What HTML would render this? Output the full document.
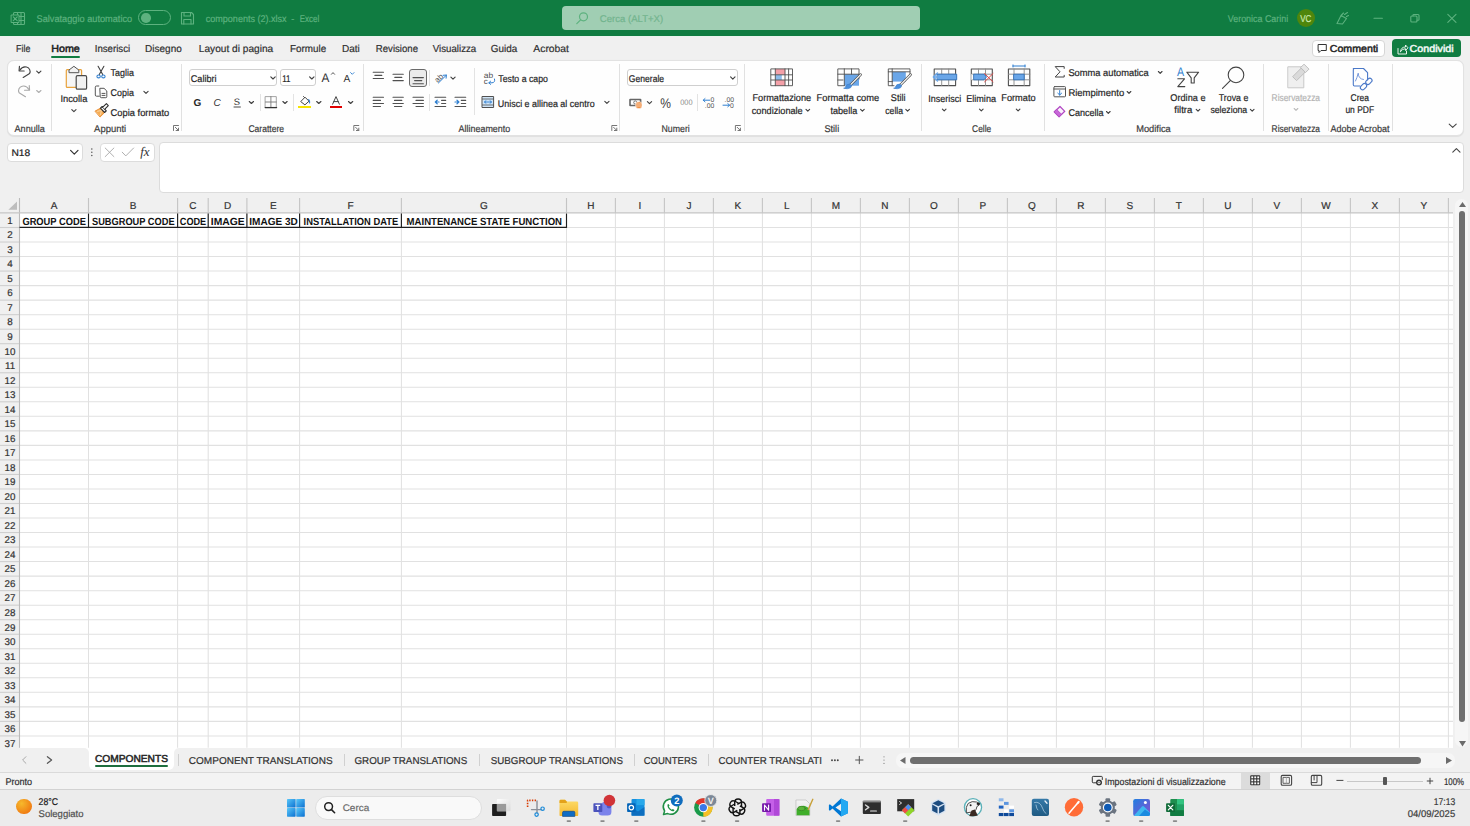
<!DOCTYPE html>
<html><head><meta charset="utf-8"><style>
html,body{text-rendering:geometricPrecision;margin:0;padding:0;width:1470px;height:826px;overflow:hidden;background:#f0f0f0;font-family:"Liberation Sans",sans-serif;}
#root{position:relative;width:1470px;height:826px;overflow:hidden;}
svg{position:absolute;left:0;top:0;}
</style></head><body><div id="root">
<div style="position:absolute;left:0px;top:0px;width:1470px;height:36px;background:#107c41"></div>
<div style="position:absolute;left:0px;top:36.2px;width:1470px;height:1.1999999999999957px;background:#eaf4ee"></div>
<div style="position:absolute;left:138px;top:10px;width:33.400000000000006px;height:15.2px;border:1.5px solid #5db27f;border-radius:8px;box-sizing:border-box"></div>
<div style="position:absolute;left:141px;top:13px;width:9.5px;height:9.5px;background:#5db27f;border-radius:50%"></div>
<div style="position:absolute;left:562px;top:6px;width:358px;height:24px;background:#a0ceb3;border-radius:4px"></div>
<div style="position:absolute;left:1297.1px;top:9px;width:18.40000000000009px;height:18.4px;background:#4f860c;border-radius:50%"></div>
<div style="position:absolute;left:51px;top:55.5px;width:29px;height:2.0px;background:#107c41;border-radius:1px"></div>
<div style="position:absolute;left:1312px;top:39.8px;width:73.29999999999995px;height:17.200000000000003px;background:#fff;border:1px solid #d6d6d6;border-radius:4px;box-sizing:border-box"></div>
<div style="position:absolute;left:1392px;top:39.2px;width:68.70000000000005px;height:17.9px;background:#107c41;border-radius:4px"></div>
<div style="position:absolute;left:6.5px;top:60.2px;width:1457.5px;height:75.39999999999999px;background:#fefefe;border:1px solid #e2e2e2;border-radius:7px;box-sizing:border-box;box-shadow:0 0.6px 1px rgba(0,0,0,0.07)"></div>
<div style="position:absolute;left:51.4px;top:64px;width:1.0px;height:67px;background:#e1e1e1"></div>
<div style="position:absolute;left:181.4px;top:64px;width:1.0px;height:67px;background:#e1e1e1"></div>
<div style="position:absolute;left:362.7px;top:64px;width:1.0px;height:67px;background:#e1e1e1"></div>
<div style="position:absolute;left:619.2px;top:64px;width:1.0px;height:67px;background:#e1e1e1"></div>
<div style="position:absolute;left:743.6px;top:64px;width:1.0px;height:67px;background:#e1e1e1"></div>
<div style="position:absolute;left:920.5px;top:64px;width:1.0px;height:67px;background:#e1e1e1"></div>
<div style="position:absolute;left:1043.9px;top:64px;width:1.0px;height:67px;background:#e1e1e1"></div>
<div style="position:absolute;left:1263.3px;top:64px;width:1.0px;height:67px;background:#e1e1e1"></div>
<div style="position:absolute;left:1327.6px;top:64px;width:1.0px;height:67px;background:#e1e1e1"></div>
<div style="position:absolute;left:1392px;top:64px;width:1px;height:67px;background:#e1e1e1"></div>
<div style="position:absolute;left:188.9px;top:69.3px;width:88.49999999999997px;height:17.200000000000003px;background:#fff;border:1px solid #cfcfcf;border-radius:3px;box-sizing:border-box"></div>
<div style="position:absolute;left:279.8px;top:69.3px;width:36.39999999999998px;height:17.200000000000003px;background:#fff;border:1px solid #cfcfcf;border-radius:3px;box-sizing:border-box"></div>
<div style="position:absolute;left:626.8px;top:69.3px;width:110.80000000000007px;height:17.10000000000001px;background:#fff;border:1px solid #cfcfcf;border-radius:3px;box-sizing:border-box"></div>
<div style="position:absolute;left:6.5px;top:142.5px;width:76.8px;height:19.099999999999994px;background:#fff;border:1px solid #dcdcdc;border-radius:4px;box-sizing:border-box"></div>
<div style="position:absolute;left:99.6px;top:142.5px;width:55.80000000000001px;height:19.099999999999994px;background:#fff;border:1px solid #dcdcdc;border-radius:4px;box-sizing:border-box"></div>
<div style="position:absolute;left:159.3px;top:142px;width:1304.7px;height:50.599999999999994px;background:#fff;border:1px solid #dcdcdc;border-radius:4px;box-sizing:border-box"></div>
<div style="position:absolute;left:0px;top:198px;width:1453.2px;height:15px;background:#f0f0f0"></div>
<div style="position:absolute;left:0px;top:213px;width:19.5px;height:534.8px;background:#f0f0f0"></div>
<div style="position:absolute;left:19.5px;top:213px;width:1433.7px;height:534.8px;background:#ffffff"></div>
<svg width="1470" height="826" style="position:absolute;left:0;top:0" fill="none"><path d="M88.5,213 V747.8" stroke="#e1e1e1" stroke-width="1.05"/><path d="M88.5,198 V213" stroke="#c4c4c4" stroke-width="1.1"/><path d="M177.6,213 V747.8" stroke="#e1e1e1" stroke-width="1.05"/><path d="M177.6,198 V213" stroke="#c4c4c4" stroke-width="1.1"/><path d="M208.2,213 V747.8" stroke="#e1e1e1" stroke-width="1.05"/><path d="M208.2,198 V213" stroke="#c4c4c4" stroke-width="1.1"/><path d="M246.9,213 V747.8" stroke="#e1e1e1" stroke-width="1.05"/><path d="M246.9,198 V213" stroke="#c4c4c4" stroke-width="1.1"/><path d="M299.6,213 V747.8" stroke="#e1e1e1" stroke-width="1.05"/><path d="M299.6,198 V213" stroke="#c4c4c4" stroke-width="1.1"/><path d="M401.4,213 V747.8" stroke="#e1e1e1" stroke-width="1.05"/><path d="M401.4,198 V213" stroke="#c4c4c4" stroke-width="1.1"/><path d="M566.5,213 V747.8" stroke="#e1e1e1" stroke-width="1.05"/><path d="M566.5,198 V213" stroke="#c4c4c4" stroke-width="1.1"/><path d="M615.4,213 V747.8" stroke="#e1e1e1" stroke-width="1.05"/><path d="M615.4,198 V213" stroke="#c4c4c4" stroke-width="1.1"/><path d="M664.4,213 V747.8" stroke="#e1e1e1" stroke-width="1.05"/><path d="M664.4,198 V213" stroke="#c4c4c4" stroke-width="1.1"/><path d="M713.4,213 V747.8" stroke="#e1e1e1" stroke-width="1.05"/><path d="M713.4,198 V213" stroke="#c4c4c4" stroke-width="1.1"/><path d="M762.4,213 V747.8" stroke="#e1e1e1" stroke-width="1.05"/><path d="M762.4,198 V213" stroke="#c4c4c4" stroke-width="1.1"/><path d="M811.4,213 V747.8" stroke="#e1e1e1" stroke-width="1.05"/><path d="M811.4,198 V213" stroke="#c4c4c4" stroke-width="1.1"/><path d="M860.4,213 V747.8" stroke="#e1e1e1" stroke-width="1.05"/><path d="M860.4,198 V213" stroke="#c4c4c4" stroke-width="1.1"/><path d="M909.4,213 V747.8" stroke="#e1e1e1" stroke-width="1.05"/><path d="M909.4,198 V213" stroke="#c4c4c4" stroke-width="1.1"/><path d="M958.4,213 V747.8" stroke="#e1e1e1" stroke-width="1.05"/><path d="M958.4,198 V213" stroke="#c4c4c4" stroke-width="1.1"/><path d="M1007.4,213 V747.8" stroke="#e1e1e1" stroke-width="1.05"/><path d="M1007.4,198 V213" stroke="#c4c4c4" stroke-width="1.1"/><path d="M1056.4,213 V747.8" stroke="#e1e1e1" stroke-width="1.05"/><path d="M1056.4,198 V213" stroke="#c4c4c4" stroke-width="1.1"/><path d="M1105.4,213 V747.8" stroke="#e1e1e1" stroke-width="1.05"/><path d="M1105.4,198 V213" stroke="#c4c4c4" stroke-width="1.1"/><path d="M1154.4,213 V747.8" stroke="#e1e1e1" stroke-width="1.05"/><path d="M1154.4,198 V213" stroke="#c4c4c4" stroke-width="1.1"/><path d="M1203.4,213 V747.8" stroke="#e1e1e1" stroke-width="1.05"/><path d="M1203.4,198 V213" stroke="#c4c4c4" stroke-width="1.1"/><path d="M1252.4,213 V747.8" stroke="#e1e1e1" stroke-width="1.05"/><path d="M1252.4,198 V213" stroke="#c4c4c4" stroke-width="1.1"/><path d="M1301.4,213 V747.8" stroke="#e1e1e1" stroke-width="1.05"/><path d="M1301.4,198 V213" stroke="#c4c4c4" stroke-width="1.1"/><path d="M1350.4,213 V747.8" stroke="#e1e1e1" stroke-width="1.05"/><path d="M1350.4,198 V213" stroke="#c4c4c4" stroke-width="1.1"/><path d="M1399.4,213 V747.8" stroke="#e1e1e1" stroke-width="1.05"/><path d="M1399.4,198 V213" stroke="#c4c4c4" stroke-width="1.1"/><path d="M1448.4,213 V747.8" stroke="#e1e1e1" stroke-width="1.05"/><path d="M1448.4,198 V213" stroke="#c4c4c4" stroke-width="1.1"/><path d="M19.5,227.5 H1453.2" stroke="#e1e1e1" stroke-width="1.05"/><path d="M0,227.5 H19.5" stroke="#cfcfcf" stroke-width="1.1"/><path d="M19.5,242.026 H1453.2" stroke="#e1e1e1" stroke-width="1.05"/><path d="M0,242.026 H19.5" stroke="#cfcfcf" stroke-width="1.1"/><path d="M19.5,256.552 H1453.2" stroke="#e1e1e1" stroke-width="1.05"/><path d="M0,256.552 H19.5" stroke="#cfcfcf" stroke-width="1.1"/><path d="M19.5,271.078 H1453.2" stroke="#e1e1e1" stroke-width="1.05"/><path d="M0,271.078 H19.5" stroke="#cfcfcf" stroke-width="1.1"/><path d="M19.5,285.604 H1453.2" stroke="#e1e1e1" stroke-width="1.05"/><path d="M0,285.604 H19.5" stroke="#cfcfcf" stroke-width="1.1"/><path d="M19.5,300.13 H1453.2" stroke="#e1e1e1" stroke-width="1.05"/><path d="M0,300.13 H19.5" stroke="#cfcfcf" stroke-width="1.1"/><path d="M19.5,314.656 H1453.2" stroke="#e1e1e1" stroke-width="1.05"/><path d="M0,314.656 H19.5" stroke="#cfcfcf" stroke-width="1.1"/><path d="M19.5,329.182 H1453.2" stroke="#e1e1e1" stroke-width="1.05"/><path d="M0,329.182 H19.5" stroke="#cfcfcf" stroke-width="1.1"/><path d="M19.5,343.70799999999997 H1453.2" stroke="#e1e1e1" stroke-width="1.05"/><path d="M0,343.70799999999997 H19.5" stroke="#cfcfcf" stroke-width="1.1"/><path d="M19.5,358.23400000000004 H1453.2" stroke="#e1e1e1" stroke-width="1.05"/><path d="M0,358.23400000000004 H19.5" stroke="#cfcfcf" stroke-width="1.1"/><path d="M19.5,372.76 H1453.2" stroke="#e1e1e1" stroke-width="1.05"/><path d="M0,372.76 H19.5" stroke="#cfcfcf" stroke-width="1.1"/><path d="M19.5,387.286 H1453.2" stroke="#e1e1e1" stroke-width="1.05"/><path d="M0,387.286 H19.5" stroke="#cfcfcf" stroke-width="1.1"/><path d="M19.5,401.812 H1453.2" stroke="#e1e1e1" stroke-width="1.05"/><path d="M0,401.812 H19.5" stroke="#cfcfcf" stroke-width="1.1"/><path d="M19.5,416.33799999999997 H1453.2" stroke="#e1e1e1" stroke-width="1.05"/><path d="M0,416.33799999999997 H19.5" stroke="#cfcfcf" stroke-width="1.1"/><path d="M19.5,430.86400000000003 H1453.2" stroke="#e1e1e1" stroke-width="1.05"/><path d="M0,430.86400000000003 H19.5" stroke="#cfcfcf" stroke-width="1.1"/><path d="M19.5,445.39 H1453.2" stroke="#e1e1e1" stroke-width="1.05"/><path d="M0,445.39 H19.5" stroke="#cfcfcf" stroke-width="1.1"/><path d="M19.5,459.916 H1453.2" stroke="#e1e1e1" stroke-width="1.05"/><path d="M0,459.916 H19.5" stroke="#cfcfcf" stroke-width="1.1"/><path d="M19.5,474.442 H1453.2" stroke="#e1e1e1" stroke-width="1.05"/><path d="M0,474.442 H19.5" stroke="#cfcfcf" stroke-width="1.1"/><path d="M19.5,488.968 H1453.2" stroke="#e1e1e1" stroke-width="1.05"/><path d="M0,488.968 H19.5" stroke="#cfcfcf" stroke-width="1.1"/><path d="M19.5,503.49399999999997 H1453.2" stroke="#e1e1e1" stroke-width="1.05"/><path d="M0,503.49399999999997 H19.5" stroke="#cfcfcf" stroke-width="1.1"/><path d="M19.5,518.02 H1453.2" stroke="#e1e1e1" stroke-width="1.05"/><path d="M0,518.02 H19.5" stroke="#cfcfcf" stroke-width="1.1"/><path d="M19.5,532.546 H1453.2" stroke="#e1e1e1" stroke-width="1.05"/><path d="M0,532.546 H19.5" stroke="#cfcfcf" stroke-width="1.1"/><path d="M19.5,547.072 H1453.2" stroke="#e1e1e1" stroke-width="1.05"/><path d="M0,547.072 H19.5" stroke="#cfcfcf" stroke-width="1.1"/><path d="M19.5,561.598 H1453.2" stroke="#e1e1e1" stroke-width="1.05"/><path d="M0,561.598 H19.5" stroke="#cfcfcf" stroke-width="1.1"/><path d="M19.5,576.124 H1453.2" stroke="#e1e1e1" stroke-width="1.05"/><path d="M0,576.124 H19.5" stroke="#cfcfcf" stroke-width="1.1"/><path d="M19.5,590.65 H1453.2" stroke="#e1e1e1" stroke-width="1.05"/><path d="M0,590.65 H19.5" stroke="#cfcfcf" stroke-width="1.1"/><path d="M19.5,605.1759999999999 H1453.2" stroke="#e1e1e1" stroke-width="1.05"/><path d="M0,605.1759999999999 H19.5" stroke="#cfcfcf" stroke-width="1.1"/><path d="M19.5,619.702 H1453.2" stroke="#e1e1e1" stroke-width="1.05"/><path d="M0,619.702 H19.5" stroke="#cfcfcf" stroke-width="1.1"/><path d="M19.5,634.2280000000001 H1453.2" stroke="#e1e1e1" stroke-width="1.05"/><path d="M0,634.2280000000001 H19.5" stroke="#cfcfcf" stroke-width="1.1"/><path d="M19.5,648.754 H1453.2" stroke="#e1e1e1" stroke-width="1.05"/><path d="M0,648.754 H19.5" stroke="#cfcfcf" stroke-width="1.1"/><path d="M19.5,663.28 H1453.2" stroke="#e1e1e1" stroke-width="1.05"/><path d="M0,663.28 H19.5" stroke="#cfcfcf" stroke-width="1.1"/><path d="M19.5,677.806 H1453.2" stroke="#e1e1e1" stroke-width="1.05"/><path d="M0,677.806 H19.5" stroke="#cfcfcf" stroke-width="1.1"/><path d="M19.5,692.332 H1453.2" stroke="#e1e1e1" stroke-width="1.05"/><path d="M0,692.332 H19.5" stroke="#cfcfcf" stroke-width="1.1"/><path d="M19.5,706.858 H1453.2" stroke="#e1e1e1" stroke-width="1.05"/><path d="M0,706.858 H19.5" stroke="#cfcfcf" stroke-width="1.1"/><path d="M19.5,721.384 H1453.2" stroke="#e1e1e1" stroke-width="1.05"/><path d="M0,721.384 H19.5" stroke="#cfcfcf" stroke-width="1.1"/><path d="M19.5,735.91 H1453.2" stroke="#e1e1e1" stroke-width="1.05"/><path d="M0,735.91 H19.5" stroke="#cfcfcf" stroke-width="1.1"/><path d="M19.5,198 V747.8" stroke="#bababa" stroke-width="1.1"/><path d="M0,212.9 H1453.2" stroke="#c6c6c6" stroke-width="1.4"/><polygon points="17,201.4 17,209.8 8.4,209.8" fill="#bdbdbd"/><path d="M19.5,227.4 H566.5" stroke="#1e1e1e" stroke-width="1.15"/><path d="M88.5,213.6 V227.9" stroke="#1e1e1e" stroke-width="1.15"/><path d="M177.6,213.6 V227.9" stroke="#1e1e1e" stroke-width="1.15"/><path d="M208.2,213.6 V227.9" stroke="#1e1e1e" stroke-width="1.15"/><path d="M246.9,213.6 V227.9" stroke="#1e1e1e" stroke-width="1.15"/><path d="M299.6,213.6 V227.9" stroke="#1e1e1e" stroke-width="1.15"/><path d="M401.4,213.6 V227.9" stroke="#1e1e1e" stroke-width="1.15"/><path d="M566.5,213.6 V227.9" stroke="#1e1e1e" stroke-width="1.15"/></svg>
<div style="position:absolute;left:1453.2px;top:198px;width:16.799999999999955px;height:550px;background:#f0f0f0"></div>
<div style="position:absolute;left:1455px;top:199px;width:13.400000000000091px;height:548px;background:#f6f6f6;border-radius:7px"></div>
<svg style="position:absolute;left:1458.5px;top:202px;" width="7" height="5" viewBox="0 0 7 5"><polygon points="3.5,0 7,5 0,5" fill="#6b6b6b"/></svg>
<div style="position:absolute;left:1458.7px;top:211px;width:6.5px;height:511px;background:#6e6e6e;border-radius:4px"></div>
<svg style="position:absolute;left:1458.5px;top:741px;" width="7" height="5.5" viewBox="0 0 7 5.5"><polygon points="0,0 7,0 3.5,5.5" fill="#6b6b6b"/></svg>
<div style="position:absolute;left:0px;top:748px;width:1470px;height:24px;background:#f0f0f0"></div>
<div style="position:absolute;left:80px;top:747.5px;width:104px;height:6.5px;background:#fff"></div>
<div style="position:absolute;left:0px;top:747.8px;width:88.6px;height:24.200000000000045px;background:#f0f0f0;border-top-right-radius:5px"></div>
<div style="position:absolute;left:174.3px;top:747.8px;width:1278.9px;height:24.200000000000045px;background:#f0f0f0;border-top-left-radius:5px"></div>
<div style="position:absolute;left:88.6px;top:748px;width:85.70000000000002px;height:22.200000000000045px;background:#e6e6e6;border-radius:0 0 5.5px 5.5px"></div>
<div style="position:absolute;left:88.6px;top:747px;width:85.70000000000002px;height:22.600000000000023px;background:#fff;border-radius:0 0 5px 5px"></div>
<div style="position:absolute;left:95px;top:765.4px;width:73px;height:1.7000000000000455px;background:#1d6e3e;border-radius:1px"></div>
<div style="position:absolute;left:178px;top:754px;width:1px;height:12px;background:#d0d0d0"></div>
<div style="position:absolute;left:343.7px;top:754px;width:1.0px;height:12px;background:#d0d0d0"></div>
<div style="position:absolute;left:478.8px;top:754px;width:1.0px;height:12px;background:#d0d0d0"></div>
<div style="position:absolute;left:634.4px;top:754px;width:1.0px;height:12px;background:#d0d0d0"></div>
<div style="position:absolute;left:707.6px;top:754px;width:1.0px;height:12px;background:#d0d0d0"></div>
<div style="position:absolute;left:896px;top:753px;width:559px;height:15px;background:#f6f6f6;border-radius:7px"></div>
<svg style="position:absolute;left:900.4px;top:756.8px;" width="5.5" height="7" viewBox="0 0 5.5 7"><polygon points="5.5,0 5.5,7 0,3.5" fill="#6b6b6b"/></svg>
<div style="position:absolute;left:910px;top:757.1px;width:511px;height:6.699999999999932px;background:#6e6e6e;border-radius:4px"></div>
<svg style="position:absolute;left:1446px;top:757.1px;" width="6" height="7" viewBox="0 0 6 7"><polygon points="0,0 6,3.5 0,7" fill="#6b6b6b"/></svg>
<div style="position:absolute;left:0px;top:772px;width:1470px;height:17px;background:#f3f3f3;border-top:1px solid #dadada;box-sizing:border-box"></div>
<div style="position:absolute;left:1240.6px;top:773px;width:29.90000000000009px;height:16px;background:#dcdcdc"></div>
<div style="position:absolute;left:1346.6px;top:781px;width:76.40000000000009px;height:1px;background:#c8c8c8"></div>
<div style="position:absolute;left:1383.3px;top:777.2px;width:3.900000000000091px;height:7.7999999999999545px;background:#555;border-radius:1px"></div>
<div style="position:absolute;left:0px;top:789px;width:1470px;height:37px;background:#ececec;border-top:1px solid #d2d2d2;box-sizing:border-box"></div>
<div style="position:absolute;left:16px;top:799px;width:15.5px;height:15.399999999999977px;background:radial-gradient(circle at 35% 30%,#f6b92c,#f07b12 75%);border-radius:50%"></div>
<div style="position:absolute;left:315.3px;top:795.6px;width:166.89999999999998px;height:24.0px;background:#f9f9f9;border:1px solid #dedede;border-radius:12px;box-sizing:border-box"></div>
<div style="position:absolute;left:259.7px;top:93.8px;width:1.0px;height:17.200000000000003px;background:#e3e3e3"></div>
<div style="position:absolute;left:293.4px;top:93.8px;width:1.0px;height:17.200000000000003px;background:#e3e3e3"></div>
<div style="position:absolute;left:298.3px;top:105.8px;width:12.599999999999966px;height:2.700000000000003px;background:#f7e500"></div>
<div style="position:absolute;left:330.1px;top:105.8px;width:11.899999999999977px;height:2.700000000000003px;background:#e00000"></div>
<div style="position:absolute;left:409.2px;top:69.1px;width:17.600000000000023px;height:17.60000000000001px;background:#ebebeb;border:1.3px solid #6a6a6a;border-radius:3px;box-sizing:border-box"></div>
<div style="position:absolute;left:429.2px;top:69.5px;width:1.0px;height:16.5px;background:#e3e3e3"></div>
<div style="position:absolute;left:429.2px;top:93.8px;width:1.0px;height:17.60000000000001px;background:#e3e3e3"></div>
<div style="position:absolute;left:474.2px;top:68.3px;width:1.0px;height:46.3px;background:#e3e3e3"></div>
<div style="position:absolute;left:697.2px;top:93.5px;width:1.0px;height:17.5px;background:#e3e3e3"></div>
<svg width="1470" height="826" viewBox="0 0 1470 826" fill="none" stroke-linecap="round" stroke-linejoin="round"><g stroke="#5db27f" stroke-width="1.1"><rect x="13.5" y="12.5" width="11" height="12" rx="1"/><path d="M17.5,12.5 V24.5 M17.5,16.5 H24.5 M17.5,20.5 H24.5 M21,12.5 V24.5"/></g>
<rect x="11.5" y="15" width="7.5" height="7.5" fill="#107c41" stroke="#5db27f" stroke-width="1"/><path d="M13.3,16.8 L17.2,20.7 M17.2,16.8 L13.3,20.7" stroke="#5db27f" stroke-width="1.1"/>
<g stroke="#5db27f" stroke-width="1.1"><path d="M181.5,12.5 H191.5 L193.5,14.5 V24 H181.5 Z"/><path d="M184,12.5 V16 H190.5 V12.5 M183.8,24 V19.5 H191 V24"/></g>
<g stroke="#5db27f" stroke-width="1.2"><circle cx="583.5" cy="16.8" r="4"/><path d="M580.6,19.8 L576.8,23.6"/></g>
<g stroke="#5db27f" stroke-width="1.1"><path d="M1337,23.5 L1341,15.5 L1346.5,18.5 L1342.5,24 Z M1341,15.5 L1343.5,13 M1344.5,14.5 L1347.5,12.5 M1346.5,16.5 L1348.5,15.5"/></g>
<path d="M1374,18.2 H1382.4" stroke="#5db27f" stroke-width="1.1"/>
<g stroke="#5db27f" stroke-width="1.1"><rect x="1410.8" y="16" width="6.2" height="6" rx="1"/><path d="M1413,16 V15 Q1413,14.5 1414,14.5 H1418 Q1419,14.5 1419,15.5 V19.5 Q1419,20.3 1418,20.3 H1417"/></g>
<path d="M1447.8,14.3 L1456,22.3 M1456,14.3 L1447.8,22.3" stroke="#5db27f" stroke-width="1.1"/>
<path d="M1318.5,44.5 H1326.3 V50.5 H1321 L1319,52.5 V50.5 H1318.5 Z" stroke="#333" stroke-width="1"/>
<g stroke="#e8f3ec" stroke-width="1"><path d="M1398,48.5 V54 H1406.5 V51"/><path d="M1400.5,51.5 Q1401,47 1405.5,47 V45 L1408,47.8 L1405.5,50.5 V48.7 Q1402.5,48.7 1400.5,51.5 Z"/></g>
<g stroke="#424242" stroke-width="1.15"><path d="M19.44,66.4 L19.08,70.9 L24.16,71.04"/><path d="M19.8,70.2 C21.5,67.5 24,66.4 26.5,67 C29.5,67.8 31,71 29.6,73.6 L23.2,77.5"/></g>
<path d="M36.699999999999996,71.2 L38.8,73.2 L40.9,71.2" stroke="#424242" stroke-width="1.15"/>
<g stroke="#a8a8a8" stroke-width="1.1"><path d="M29.24,85.6 L29.6,90.1 L24.52,90.24"/><path d="M28.88,89.4 C27.18,86.7 24.68,85.6 22.18,86.2 C19.18,87 17.68,90.2 19.08,92.8 L25.48,96.7"/></g>
<path d="M36.699999999999996,90.5 L38.8,92.5 L40.9,90.5" stroke="#b0b0b0" stroke-width="1.15"/>
<rect x="66.3" y="69.6" width="15.3" height="17.8" rx="1" fill="#f6f6f6" stroke="#e8a23c" stroke-width="1.2"/>
<path d="M69,72.3 V70 L73.9,66.3 L78.8,70 V72.3 Z" fill="#f2f2f2" stroke="#555" stroke-width="1"/>
<rect x="76.2" y="75.6" width="10.4" height="13.6" rx="1.3" fill="#f2f2f2" stroke="#4a4a4a" stroke-width="1.2"/>
<path d="M71.80000000000001,109.6 L73.9,111.6 L76.0,109.6" stroke="#424242" stroke-width="1.15"/>
<g stroke="#404040" stroke-width="1.1"><path d="M98.1,66.3 L102.7,74.6 M103.9,66.3 L99.3,74.6"/></g><g stroke="#2f7fd0" stroke-width="1.05"><ellipse cx="98.6" cy="76.4" rx="1.7" ry="1.45"/><ellipse cx="103.4" cy="76.4" rx="1.7" ry="1.45"/></g>
<path d="M98.8,86 H96.5 Q95.3,86 95.3,87.2 V95 Q95.3,96.2 96.5,96.2 H99.3" stroke="#555" stroke-width="1"/>
<path d="M100.2,88.3 H104 L106.8,91 V96.7 Q106.8,97.7 105.8,97.7 H101.2 Q100.2,97.7 100.2,96.7 Z M102,93.4 H105 M102,95.4 H105" stroke="#555" stroke-width="1"/>
<path d="M143.9,91.4 L146,93.4 L148.1,91.4" stroke="#424242" stroke-width="1.15"/>
<path d="M95.3,111 L100.4,108.2 L104.6,112.5 L100.3,116.8 Z" fill="#f5ad55" stroke="#e8892c" stroke-width="0.9"/>
<path d="M97.5,111.3 L101.5,110.4 L100.5,114.5" stroke="#fce0b8" stroke-width="0.8"/>
<path d="M100.4,108.2 L102.2,106.5 L106.3,110.8 L104.6,112.5 Z" fill="#fff" stroke="#2e2e2e" stroke-width="1.1"/>
<path d="M102.8,107.2 L106.4,103.7 L108.3,105.6 L104.8,109.2" fill="#fff" stroke="#2e2e2e" stroke-width="1.1"/>
<path d="M173.5,130.5 V125.5 H178.5 M175.3,127.3 L178.5,130.5 M178.5,128.1 V130.5 H176.1" stroke="#666" stroke-width="0.9"/>
<path d="M353.8,130.5 V125.5 H358.8 M355.6,127.3 L358.8,130.5 M358.8,128.1 V130.5 H356.40000000000003" stroke="#666" stroke-width="0.9"/>
<path d="M611.8,130.5 V125.5 H616.8 M613.5999999999999,127.3 L616.8,130.5 M616.8,128.1 V130.5 H614.4" stroke="#666" stroke-width="0.9"/>
<path d="M735.4,130.5 V125.5 H740.4 M737.1999999999999,127.3 L740.4,130.5 M740.4,128.1 V130.5 H738.0" stroke="#666" stroke-width="0.9"/>
<path d="M270.8,76.80000000000001 L273,79.0 L275.2,76.80000000000001" stroke="#424242" stroke-width="1.15"/>
<path d="M309.6,76.80000000000001 L311.8,79.0 L314.0,76.80000000000001" stroke="#424242" stroke-width="1.15"/>
<path d="M730.5999999999999,76.9 L732.8,79.1 L735.0,76.9" stroke="#424242" stroke-width="1.15"/>
<text x="321.6" y="81.7" font-family="Liberation Sans" font-size="12.4" fill="#333" stroke="none" transform="translate(321.6,0) scale(0.95,1) translate(-321.6,0)">A</text>
<path d="M331.4,74.3 L333,72.6 L334.6,74.3" stroke="#444" stroke-width="0.9"/>
<text x="343.4" y="81.7" font-family="Liberation Sans" font-size="10.2" fill="#333" stroke="none">A</text>
<path d="M350.6,72.6 L352.3,74.3 L354,72.6" stroke="#2f7fd0" stroke-width="0.9"/>
<text x="193.6" y="105.6" font-family="Liberation Sans" font-size="10" font-weight="700" fill="#262626" stroke="none">G</text>
<text x="213.4" y="105.6" font-family="Liberation Sans" font-size="10" font-style="italic" fill="#333" stroke="none">C</text>
<text x="233.8" y="105.3" font-family="Liberation Sans" font-size="9.4" fill="#333" stroke="none">S</text><path d="M234,107 H240.4" stroke="#333" stroke-width="0.9"/>
<path d="M249.3,101.5 L251.4,103.5 L253.5,101.5" stroke="#424242" stroke-width="1.15"/>
<g stroke="#555" stroke-width="0.9"><rect x="265.5" y="96.6" width="10.8" height="10.8" stroke-dasharray="none" stroke="#9a9a9a"/><path d="M270.9,96.6 V107.4 M265.5,102 H276.3" stroke="#777"/></g><path d="M265.2,107.6 H276.6" stroke="#333" stroke-width="1.3"/>
<path d="M282.9,101.5 L285,103.5 L287.1,101.5" stroke="#424242" stroke-width="1.15"/>
<path d="M301,101.3 L305,97.2 L309,101.2 L305.2,104.6 Z" stroke="#444" stroke-width="1"/><path d="M303.5,96.5 L304.6,97.6" stroke="#444" stroke-width="1"/><path d="M308.7,99.5 Q310,101 309.6,103" stroke="#2f7fd0" stroke-width="1.1"/>
<path d="M316.7,101.5 L318.8,103.5 L320.90000000000003,101.5" stroke="#424242" stroke-width="1.15"/>
<path d="M332.6,104.2 L336,96.6 L339.4,104.2 M333.8,101.6 H338.2" stroke="#444" stroke-width="1"/>
<path d="M348.5,101.5 L350.6,103.5 L352.70000000000005,101.5" stroke="#424242" stroke-width="1.15"/>
<path d="M373.2,72.3 H383.5 M374.9,75.4 H381.8 M373.2,78.5 H383.5 " stroke="#505050" stroke-width="1.1"/>
<path d="M393,74.3 H403.3 M394.8,77.4 H401.8 M393,80.6 H403.3 " stroke="#505050" stroke-width="1.1"/>
<path d="M413,77.6 H423.4 M414.6,80.6 H421.8 M413,83.7 H423.4 " stroke="#505050" stroke-width="1.1"/>
<text x="0" y="0" font-family="Liberation Sans" font-size="7.8" fill="#505050" stroke="none" transform="translate(437.6,83) rotate(-45)">ab</text>
<path d="M438.4,83 L446.3,75.2 M443.2,75.3 L446.4,75 L446.1,78.2" stroke="#2f7fd0" stroke-width="1"/>
<path d="M450.9,77.2 L453,79.2 L455.1,77.2" stroke="#424242" stroke-width="1.15"/>
<path d="M373.2,97.3 H383.5 M373.2,100.4 H380.5 M373.2,103.5 H383.5 M373.2,106.5 H380.5 " stroke="#505050" stroke-width="1.1"/>
<path d="M393,97.3 H403.3 M394.5,100.4 H401.8 M393,103.5 H403.3 M394.5,106.5 H401.8 " stroke="#505050" stroke-width="1.1"/>
<path d="M413,97.3 H423.4 M416,100.4 H423.4 M413,103.5 H423.4 M416,106.5 H423.4 " stroke="#505050" stroke-width="1.1"/>
<path d="M435,97.3 H445.7 M435,106.5 H445.7 " stroke="#505050" stroke-width="1.1"/>
<path d="M441.6,100.4 H445.7 M441.6,103.5 H445.7 " stroke="#505050" stroke-width="1.1"/>
<path d="M439,102 H435.5 M437.2,100.2 L435.3,102 L437.2,103.8" stroke="#2f7fd0" stroke-width="1.2"/>
<path d="M455,97.3 H465.7 M455,106.5 H465.7 " stroke="#505050" stroke-width="1.1"/>
<path d="M461.3,100.4 H465.7 M461.3,103.5 H465.7 " stroke="#505050" stroke-width="1.1"/>
<path d="M455,102 H458.7 M457,100.2 L458.9,102 L457,103.8" stroke="#2f7fd0" stroke-width="1.2"/>
<text x="483.8" y="78.4" font-family="Liberation Sans" font-size="8" fill="#505050" stroke="none" textLength="9.4" lengthAdjust="spacingAndGlyphs">ab</text><text x="483.8" y="83.6" font-family="Liberation Sans" font-size="8" fill="#505050" stroke="none">c</text>
<path d="M494.5,79 Q495.5,82.5 492,82.8 H489 M490.6,81.2 L488.8,82.8 L490.6,84.4" stroke="#2f7fd0" stroke-width="1"/>
<rect x="482.4" y="96.5" width="11.2" height="11" fill="#cfe4f7" stroke="#505050" stroke-width="1"/><path d="M482.4,99 H493.6 M482.4,105 H493.6" stroke="#505050" stroke-width="0.8"/><path d="M484.5,102 H491.5 M486,100.7 L484.5,102 L486,103.3 M490,100.7 L491.5,102 L490,103.3" stroke="#2f7fd0" stroke-width="0.9"/>
<path d="M604.8,101.4 L606.9,103.4 L609.0,101.4" stroke="#424242" stroke-width="1.15"/>
<rect x="629.2" y="98.8" width="12.2" height="7.4" rx="1" fill="#666" stroke="none"/><rect x="630.8" y="100.2" width="9" height="4.6" rx="0.5" fill="#fff" stroke="none"/><circle cx="635.3" cy="102.5" r="1.6" stroke="#666" stroke-width="0.9"/>
<rect x="635.6" y="101.8" width="6.4" height="6.6" rx="2.5" fill="#f08a3c" stroke="#fff" stroke-width="0.6"/><path d="M636.4,104 H641.2 M636.4,106 H641.2" stroke="#fff" stroke-width="0.6"/>
<path d="M647.4,101.7 L649.5,103.7 L651.6,101.7" stroke="#424242" stroke-width="1.15"/>
<text x="660.3" y="108.2" font-family="Liberation Sans" font-size="14" fill="#404040" stroke="none" transform="translate(660.3,0) scale(0.86,1) translate(-660.3,0)">%</text>
<text x="680.2" y="105.2" font-family="Liberation Sans" font-size="8" fill="#8a8a8a" stroke="none" transform="translate(680.2,0) scale(0.92,1) translate(-680.2,0)">000</text>
<text x="710.5" y="101.6" font-family="Liberation Sans" font-size="6.8" fill="#555" stroke="none">0</text><text x="704.8" y="108.2" font-family="Liberation Sans" font-size="6.8" fill="#555" stroke="none">.00</text>
<path d="M709.8,100.2 H703.3 M705,98.6 L703.2,100.2 L705,101.8" stroke="#2f7fd0" stroke-width="1"/>
<text x="724.6" y="101.6" font-family="Liberation Sans" font-size="6.8" fill="#555" stroke="none">.00</text><text x="730" y="108.2" font-family="Liberation Sans" font-size="6.8" fill="#555" stroke="none">0</text>
<path d="M723,105.2 H729.5 M727.8,103.6 L729.6,105.2 L727.8,106.8" stroke="#2f7fd0" stroke-width="1"/>
<rect x="775.3" y="68.9" width="9.8" height="5.9" fill="#f4a0a8" stroke="none"/><rect x="775.3" y="80" width="9.8" height="5.7" fill="#f4a0a8" stroke="none"/><rect x="775.3" y="74.8" width="6.5" height="5.2" fill="#8fbcea" stroke="none"/>
<g stroke="#505050" stroke-width="0.9"><rect x="771.2" y="68.9" width="21.3" height="16.8"/><path d="M775.3,68.9 V85.7 M785,68.9 V85.7 M788.6,68.9 V85.7 M771.2,74.8 H792.5 M771.2,80 H792.5"/></g>
<rect x="844.3" y="74.2" width="14.7" height="11.5" fill="#6aa6e8" stroke="none"/>
<g stroke="#505050" stroke-width="0.9"><path d="M859,79 V68.9 H837.8 V85.7 H844 M837.8,74.2 H859 M837.8,80 H843 M844.3,68.9 V85.7 M851.5,68.9 V74.2"/></g>
<path d="M860.6,74.6 L850,85.4" stroke="#505050" stroke-width="2.6"/><path d="M860.6,74.6 L850,85.4" stroke="#fff" stroke-width="1.2"/>
<path d="M849.5,84 Q846,84 845.5,87 Q844.5,88.3 843.6,88.2 Q847.5,89.5 850.5,87.8 Q852,86.5 851.4,85.2 Z" fill="#4a8fdc" stroke="#3a7cc9" stroke-width="0.6"/>
<rect x="892.2" y="71.8" width="13.6" height="9.8" fill="#6aa6e8" stroke="none"/>
<g stroke="#505050" stroke-width="0.9"><path d="M910,76 V68.9 H888.3 V85.7 H894 M888.3,71.8 H910 M888.3,81.6 H892.5 M892.2,68.9 V85.7"/></g>
<path d="M910.6,74.6 L900,85.4" stroke="#505050" stroke-width="2.6"/><path d="M910.6,74.6 L900,85.4" stroke="#fff" stroke-width="1.2"/>
<path d="M899.5,84 Q896,84 895.5,87 Q894.5,88.3 893.6,88.2 Q897.5,89.5 900.5,87.8 Q902,86.5 901.4,85.2 Z" fill="#4a8fdc" stroke="#3a7cc9" stroke-width="0.6"/>
<path d="M806.0,109.39999999999999 L807.8,111.2 L809.5999999999999,109.39999999999999" stroke="#424242" stroke-width="1.15"/>
<path d="M860.6,109.39999999999999 L862.4,111.2 L864.1999999999999,109.39999999999999" stroke="#424242" stroke-width="1.15"/>
<path d="M905.8000000000001,109.39999999999999 L907.6,111.2 L909.4,109.39999999999999" stroke="#424242" stroke-width="1.15"/>
<path d="M934.2,69 H955.6 V85.6 H934.2 Z " stroke="#505050" stroke-width="1.1"/>
<path d="M934.2,74.2 H955.6 M934.2,79.8 H955.6 M941.7,69 V85.6 M948.7,69 V85.6" stroke="#8a8a8a" stroke-width="0.9"/>
<rect x="937.5" y="74.2" width="19.2" height="5.6" fill="#6aa6e8" stroke="#2f6fb8" stroke-width="0.9"/>
<path d="M942.6,77 H934 M937.5,73 L933.3,77 L937.5,81" stroke="#6aa6e8" stroke-width="1.4"/>
<path d="M971.3,69 H992.3 V85.6 H971.3 Z " stroke="#505050" stroke-width="1.1"/>
<path d="M971.3,74.2 H992.3 M971.3,79.8 H992.3 M978.5,69 V85.6 M985.5,69 V85.6" stroke="#8a8a8a" stroke-width="0.9"/>
<rect x="971.3" y="74.2" width="1" height="5.6" fill="#fff" stroke="none"/><path d="M974,74.2 H984 L986.5,77 L984,79.8 H974 Z" fill="#6aa6e8" stroke="#2f6fb8" stroke-width="0.9"/>
<path d="M984.6,73.6 L993,81.8 M993,73.6 L984.6,81.8" stroke="#e04545" stroke-width="1"/>
<path d="M1008.4,69 H1029.8 V85.6 H1008.4 Z " stroke="#505050" stroke-width="1.1"/>
<path d="M1008.4,74.2 H1029.8 M1008.4,79.8 H1029.8 M1014,69 V85.6 M1024.2,69 V85.6" stroke="#8a8a8a" stroke-width="0.9"/>
<rect x="1014" y="74.2" width="10.2" height="5.6" fill="#6aa6e8" stroke="#2f6fb8" stroke-width="0.9"/><path d="M1013,66 H1025 M1013,64.9 V67 M1025,64.9 V67" stroke="#2f7fd0" stroke-width="1"/>
<path d="M942.4000000000001,109.1 L944.2,110.9 L946.0,109.1" stroke="#424242" stroke-width="1.15"/>
<path d="M979.5,109.1 L981.3,110.9 L983.0999999999999,109.1" stroke="#424242" stroke-width="1.15"/>
<path d="M1016.3000000000001,109.1 L1018.1,110.9 L1019.9,109.1" stroke="#424242" stroke-width="1.15"/>
<path d="M1064.2,68.4 V66.6 H1055.2 L1060,71.8 L1055.2,77 H1064.2 V75.3" stroke="#444" stroke-width="1"/>
<path d="M1158.4,71.5 L1160.2,73.30000000000001 L1162.0,71.5" stroke="#424242" stroke-width="1.15"/>
<rect x="1053.9" y="86.6" width="11.6" height="10.2" rx="0.8" stroke="#555" stroke-width="1"/><path d="M1053.9,89 H1065.5" stroke="#555" stroke-width="1"/><path d="M1059.7,90.5 V95 M1057.8,93.2 L1059.7,95 L1061.6,93.2" stroke="#2f7fd0" stroke-width="1"/>
<path d="M1127.2,91.5 L1129,93.30000000000001 L1130.8,91.5" stroke="#424242" stroke-width="1.15"/>
<path d="M1054.3,112 L1060,106.5 L1064.8,111.3 L1059.1,116.8 Z" fill="#faf0fc" stroke="#b146c2" stroke-width="1.2"/><path d="M1054.3,112 L1059.1,116.8 L1061.6,114.4 L1056.8,109.6 Z" fill="#c767d8" stroke="#b146c2" stroke-width="0.8"/>
<path d="M1106.5,111.5 L1108.3,113.30000000000001 L1110.1,111.5" stroke="#424242" stroke-width="1.15"/>
<text x="1177" y="76.3" font-family="Liberation Sans" font-size="12.4" fill="#2f7fd0" stroke="none" transform="translate(1177,76.3) scale(0.86,1) translate(-1177,-76.3)">A</text>
<path d="M1177.8,78.8 H1184.5 L1177.8,86.6 H1184.8" stroke="#444" stroke-width="1.1"/>
<path d="M1186.8,72.2 H1198.6 L1194.2,77.8 V83 H1191.2 V77.8 Z" stroke="#444" stroke-width="1.1"/>
<path d="M1196.2,109.3 L1198,111.10000000000001 L1199.8,109.3" stroke="#424242" stroke-width="1.15"/>
<circle cx="1236" cy="74.9" r="7.8" stroke="#444" stroke-width="1.1"/><path d="M1230.5,80.4 L1222.5,88.4" stroke="#444" stroke-width="1.1"/>
<path d="M1250.4,109.3 L1252.2,111.10000000000001 L1254.0,109.3" stroke="#424242" stroke-width="1.15"/>
<rect x="1288.2" y="66.8" width="15.6" height="21" fill="#efefef" stroke="#c8c8c8" stroke-width="1"/>
<g transform="translate(1299,74) rotate(-45)"><rect x="-6" y="-2.6" width="12" height="5.6" fill="#dadada" stroke="#bcbcbc" stroke-width="0.9"/><rect x="6" y="-3.4" width="4.5" height="7" fill="#e8e8e8" stroke="#bcbcbc" stroke-width="0.9"/></g>
<path d="M1294.2,108.5 L1296,110.30000000000001 L1297.8,108.5" stroke="#bdbdbd" stroke-width="1.15"/>
<path d="M1353.3,68.5 H1363.5 L1367.6,72.6 V80 M1360,86 H1354.5 Q1353.3,86 1353.3,84.8 V69.8 Q1353.3,68.5 1354.5,68.5" stroke="#4a78c8" stroke-width="1.1"/>
<path d="M1355.5,81 Q1357,78 1358.2,73.2 Q1358.5,79 1363.5,79.5" stroke="#6a90d8" stroke-width="0.9"/>
<g transform="translate(1366.2,84) rotate(-45)" stroke="#4a78c8" stroke-width="1.1"><rect x="-7.3" y="-2.2" width="7" height="4.4" rx="2.2"/><rect x="0.3" y="-2.2" width="7" height="4.4" rx="2.2"/></g>
<path d="M1449.2,124.2 L1452.7,127.4 L1456.2,124.2" stroke="#444" stroke-width="1.1"/>
<path d="M70.6,150.4 L74.3,154.1 L78,150.4" stroke="#333" stroke-width="1.2"/>
<g fill="#555" stroke="none"><circle cx="91.8" cy="148.9" r="0.75"/><circle cx="91.8" cy="152.2" r="0.75"/><circle cx="91.8" cy="155.5" r="0.75"/></g>
<path d="M105.2,148 L113.9,156.6 M113.9,148 L105.2,156.6" stroke="#a6a6a6" stroke-width="0.9"/>
<path d="M122.2,152.2 L125.8,155.9 L133.6,148" stroke="#a6a6a6" stroke-width="0.9"/>
<path d="M1452.8,152.2 L1456.4,148.6 L1460,152.2" stroke="#444" stroke-width="1.1"/>
<path d="M25.9,756.7 L22.6,760 L25.9,763.3" stroke="#a8a8a8" stroke-width="1"/>
<path d="M47.4,756.7 L51.6,760 L47.4,763.3" stroke="#555" stroke-width="1.2"/>
<g fill="#444" stroke="none"><circle cx="832" cy="760.2" r="0.95"/><circle cx="834.9" cy="760.2" r="0.95"/><circle cx="837.8" cy="760.2" r="0.95"/></g>
<path d="M855.6,760 H863 M859.3,756.3 V763.7" stroke="#555" stroke-width="1"/>
<g fill="#8a8a8a" stroke="none"><circle cx="884" cy="756.8" r="0.65"/><circle cx="884" cy="760.1" r="0.65"/><circle cx="884" cy="763.4" r="0.65"/></g>
<path d="M1096,782.8 H1093.2 Q1092.3,782.8 1092.3,781.9 V777.2 Q1092.3,776.4 1093.2,776.4 H1101.4 Q1102.3,776.4 1102.3,777.2 V779.5" stroke="#333" stroke-width="1"/>
<circle cx="1099" cy="782.6" r="2.3" stroke="#333" stroke-width="1.4"/><circle cx="1099" cy="782.6" r="0.6" fill="#333" stroke="none"/>
<rect x="1250.2" y="775.3" width="10" height="10" rx="1" fill="#333" stroke="none"/><g fill="#fff" stroke="none"><rect x="1251.3" y="776.4" width="1.9" height="1.9"/><rect x="1251.3" y="779.4" width="1.9" height="1.9"/><rect x="1251.3" y="782.4" width="1.9" height="1.9"/><rect x="1254.3" y="776.4" width="1.9" height="1.9"/><rect x="1254.3" y="779.4" width="1.9" height="1.9"/><rect x="1254.3" y="782.4" width="1.9" height="1.9"/><rect x="1257.3" y="776.4" width="1.9" height="1.9"/><rect x="1257.3" y="779.4" width="1.9" height="1.9"/><rect x="1257.3" y="782.4" width="1.9" height="1.9"/></g>
<rect x="1281.2" y="775.4" width="10.4" height="9.9" rx="1.3" stroke="#444" stroke-width="1.1"/><rect x="1283.4" y="777.4" width="6" height="5.9" stroke="#555" stroke-width="0.9"/><path d="M1286.4,777.4 V783.3" stroke="#999" stroke-width="0.7"/>
<rect x="1311.3" y="775.4" width="10.4" height="9.9" rx="1.3" stroke="#444" stroke-width="1.1"/><path d="M1311.3,782.6 H1317 V775.4 M1314.1,775.4 V780" stroke="#444" stroke-width="1"/>
<path d="M1336.8,780.4 H1343" stroke="#444" stroke-width="1"/>
<path d="M1427.2,781 H1432.8 M1430,778.2 V783.8" stroke="#444" stroke-width="1"/>
<defs><linearGradient id="gwin" x1="0" y1="0" x2="1" y2="1"><stop offset="0" stop-color="#5ac8fa"/><stop offset="1" stop-color="#0a6fd0"/></linearGradient><linearGradient id="gfold" x1="0" y1="0" x2="0" y2="1"><stop offset="0" stop-color="#fddc6a"/><stop offset="1" stop-color="#f5b72c"/></linearGradient><linearGradient id="gtv" x1="0" y1="0" x2="1" y2="1"><stop offset="0" stop-color="#ffffff"/><stop offset="1" stop-color="#d8d8d8"/></linearGradient><linearGradient id="gphot" x1="0" y1="0" x2="1" y2="1"><stop offset="0" stop-color="#1f7fe0"/><stop offset="1" stop-color="#8a4fd0"/></linearGradient><linearGradient id="gmy" x1="0" y1="0" x2="0" y2="1"><stop offset="0" stop-color="#3579a8"/><stop offset="1" stop-color="#1f5a82"/></linearGradient><linearGradient id="gnpp" x1="0" y1="0" x2="0" y2="1"><stop offset="0" stop-color="#f4f4f4"/><stop offset="1" stop-color="#e0e0e0"/></linearGradient></defs>
<rect x="287" y="798.9" width="8.6" height="8.6" rx="0.6" fill="url(#gwin)" stroke="none"/>
<rect x="296.2" y="798.9" width="8.6" height="8.6" rx="0.6" fill="url(#gwin)" stroke="none"/>
<rect x="287" y="808.1" width="8.6" height="8.6" rx="0.6" fill="url(#gwin)" stroke="none"/>
<rect x="296.2" y="808.1" width="8.6" height="8.6" rx="0.6" fill="url(#gwin)" stroke="none"/>
<circle cx="328.6" cy="806.6" r="3.9" stroke="#222" stroke-width="1.5"/><path d="M331.5,809.6 L334.6,812.7" stroke="#222" stroke-width="1.6"/>
<rect x="492.1" y="803.9" width="14" height="12.2" rx="0.8" fill="#1e1e1e" stroke="none"/><rect x="496.9" y="799.1" width="13.6" height="12.2" rx="0.8" fill="url(#gtv)" stroke="none" opacity="0.95"/><rect x="496.9" y="803.9" width="9.2" height="7.4" fill="#9a9a9a" stroke="none"/>
<path d="M536,800.4 H527.6 V808" stroke="#d83b01" stroke-width="1.6" stroke-dasharray="1.4 1.3" stroke-linecap="butt"/>
<path d="M537,801 V812.6 M531.5,809.6 H541" stroke="#8a8f98" stroke-width="1.4"/>
<circle cx="542.6" cy="808.7" r="1.7" stroke="#1a8ad8" stroke-width="1.2"/><circle cx="536.6" cy="814.6" r="1.7" stroke="#1a8ad8" stroke-width="1.2"/>
<path d="M559.5,801 Q559.5,799.8 560.7,799.8 H565 L566.8,801.6 H577 Q578.2,801.6 578.2,802.8 V814.9 Q578.2,816.1 577,816.1 H560.7 Q559.5,816.1 559.5,814.9 Z" fill="url(#gfold)" stroke="none"/>
<path d="M559.5,801 Q559.5,799.8 560.7,799.8 H565 L566.8,801.6 V803 H559.5 Z" fill="#e3a21a" stroke="none"/>
<path d="M562.6,816.1 V812.6 Q562.6,811.3 563.9,811.3 H573.5 Q574.8,811.3 574.8,812.6 V816.1 Z" fill="#0f6cc4" stroke="#144f8f" stroke-width="0.8"/>
<circle cx="605" cy="805" r="3.2" fill="#7b83eb" stroke="none"/><path d="M598.5,806 H611.4 V812 Q611.4,815.6 607.6,815.6 H602 Q598.5,815.6 598.5,812 Z" fill="#7b83eb" stroke="none"/><circle cx="609" cy="806" r="2.4" fill="#5059c9" stroke="none"/>
<rect x="593.4" y="803.2" width="8.9" height="8.8" rx="0.8" fill="#4b53bc" stroke="none"/><path d="M595.5,805.4 H600.2 M597.85,805.4 V810" stroke="#fff" stroke-width="1.3" stroke-linecap="butt"/>
<circle cx="609.4" cy="800.5" r="5.8" fill="#d13438" stroke="none"/>
<rect x="631.5" y="799.1" width="13" height="16.7" rx="1" fill="#1490df" stroke="none"/><rect x="636.5" y="799.1" width="8" height="6" fill="#28a8ea" stroke="none"/><path d="M631.5,807 L638,811.5 L644.5,807 V815.8 H631.5 Z" fill="#0a5fb0" stroke="none" opacity="0.7"/>
<rect x="627.1" y="803.2" width="8.5" height="8.8" rx="0.8" fill="#0364b8" stroke="none"/><circle cx="631.35" cy="807.6" r="2.2" stroke="#fff" stroke-width="1.2"/>
<path d="M663.5,814.5 L664.6,811 A7.6,7.6 0 1 1 667.7,813.6 Z" fill="#fff" stroke="#1f8f45" stroke-width="1.5"/>
<path d="M667.5,804.5 Q667,807.5 670,810 Q672.5,811.8 674,811 L674.5,810 L672.8,809 L671.8,809.8 Q669.5,808.5 668.8,806.6 L669.6,805.6 L668.5,804 Z" fill="#1f8f45" stroke="none"/>
<circle cx="676.8" cy="800.5" r="6" fill="#0f6cbd" stroke="none"/>
<circle cx="703.3" cy="807.6" r="9.2" fill="#1a9a4a" stroke="none"/>
<path d="M703.3,807.6 L695.3,803 A9.2,9.2 0 0 1 711.3,803 Z" fill="#e0362b" stroke="none"/>
<path d="M703.3,807.6 L711.3,803 A9.2,9.2 0 0 1 703.3,816.8 Z" fill="#f6c026" stroke="none"/>
<circle cx="703.3" cy="807.6" r="4.7" fill="#fff" stroke="none"/><circle cx="703.3" cy="807.6" r="3.7" fill="#3b78e7" stroke="none"/>
<rect x="704.8" y="794.5" width="12" height="12" rx="6" fill="#7c8897" stroke="#eaeaea" stroke-width="0.8"/>
<g transform="translate(737.3,807.4)" stroke="#111" stroke-width="1.4" stroke-linecap="butt"><path d="M-2.6,-1.5 V-5 A3.4,3.4 0 0 1 4.2,-5 V-0.5" transform="rotate(0)"/><path d="M-2.6,-1.5 V-5 A3.4,3.4 0 0 1 4.2,-5 V-0.5" transform="rotate(60)"/><path d="M-2.6,-1.5 V-5 A3.4,3.4 0 0 1 4.2,-5 V-0.5" transform="rotate(120)"/><path d="M-2.6,-1.5 V-5 A3.4,3.4 0 0 1 4.2,-5 V-0.5" transform="rotate(180)"/><path d="M-2.6,-1.5 V-5 A3.4,3.4 0 0 1 4.2,-5 V-0.5" transform="rotate(240)"/><path d="M-2.6,-1.5 V-5 A3.4,3.4 0 0 1 4.2,-5 V-0.5" transform="rotate(300)"/></g>
<rect x="766.2" y="799.1" width="13.3" height="16.7" rx="1" fill="#c560e8" stroke="none"/><rect x="774" y="799.1" width="5.5" height="16.7" fill="#9b2fc8" stroke="none" opacity="0.5"/>
<rect x="762.1" y="803.2" width="8.9" height="8.8" rx="0.8" fill="#7719aa" stroke="none"/><path d="M764.5,810.2 V805 L768.6,810.2 V805" stroke="#fff" stroke-width="1.1"/>
<path d="M796.3,800 H806 L809.8,803.8 V815.4 H796.3 Z" fill="url(#gnpp)" stroke="#bdbdbd" stroke-width="0.7"/>
<path d="M796.6,815.2 V809 Q800,805 805,806 Q808.5,807 809.5,810 V815.2 Z" fill="#3fae2a" stroke="none"/><ellipse cx="801.5" cy="808.5" rx="3.8" ry="2.2" fill="#5ab43a" stroke="#2f7a20" stroke-width="0.6"/>
<path d="M812.8,799.3 L808.2,809.6" stroke="#c8a038" stroke-width="1.4"/>
<path d="M841,798.6 L847.9,801.8 V813.2 L841,816.4 L832.5,808.6 L829.9,810.8 L828.9,810 V805 L829.9,804.2 L832.5,806.4 Z" fill="#0078d4" stroke="none"/>
<path d="M841,798.6 L847.9,801.8 V813.2 L841,816.4 Z" fill="#23a9f2" stroke="none"/><path d="M841,803.8 L835.5,807.5 L841,811.2 Z" fill="#f0f0f0" stroke="none"/>
<rect x="862.8" y="800.8" width="18.1" height="13.3" rx="1" fill="#2e2e2e" stroke="none"/><rect x="862.8" y="800.8" width="18.1" height="1.6" fill="#8a8a8a" stroke="none"/>
<path d="M865.5,805 L868.8,807.4 L865.5,809.8" stroke="#d8d8d8" stroke-width="1.4"/><path d="M870.6,811 H876.4" stroke="#e8e8e8" stroke-width="1.2"/>
<rect x="897.2" y="799.1" width="17" height="12.2" fill="#2e2e2e" stroke="none"/><path d="M899.6,801.6 L901.6,803 L899.6,804.4" stroke="#eee" stroke-width="0.9"/>
<path d="M908.2,804.2 L914.5,810.3 L908.2,816.4 L901.9,810.3 Z" fill="#8fd42a" stroke="none"/><path d="M908.2,804.2 L901.9,810.3 L905,813.4 L911.3,807.3 Z" fill="#ee4b4b" stroke="none"/><path d="M908.2,804.2 L911.3,807.3 L908.2,810.3 L905.2,807.3 Z" fill="#4b8ff0" stroke="none"/>
<path d="M938.3,798.8 L945.8,802.6 V811.5 L938.3,815.8 L930.9,811.5 V802.6 Z" fill="#d8e4f2" stroke="none"/><path d="M938.3,800.3 L944.2,803.2 L938.3,806.2 L932.4,803.2 Z" fill="#1d4d80" stroke="none"/><path d="M932.2,804.6 L937.5,807.4 V813.6 L932.2,810.8 Z M939.1,807.4 L944.4,804.6 V810.8 L939.1,813.6 Z" fill="#1d4d80" stroke="none"/>
<circle cx="973" cy="807.3" r="8.6" fill="#fff" stroke="#5ab0b8" stroke-width="1.3"/>
<path d="M966.3,812.5 Q965.4,806.5 968.2,803.4 Q972,800.6 976.6,802 L979.6,803.3 Q979.8,805.6 977,806.4 Q976.6,809.6 974.6,811.4 Z" fill="#f2f2f2" stroke="#3a3a3a" stroke-width="0.9"/>
<ellipse cx="978.2" cy="803.9" rx="1.6" ry="1.1" fill="#1e1e1e" stroke="none"/><circle cx="970.6" cy="805.2" r="1" fill="#1e1e1e" stroke="none"/>
<path d="M969.2,815.9 L971.6,810.6 L974.8,809.4 L977.8,815.6 Q973.5,816.8 969.2,815.9 Z" fill="#3b2a22" stroke="none"/>
<rect x="998.8" y="798.3" width="4.7" height="3" fill="#8fb8ea" stroke="none"/>
<rect x="1004" y="801.9" width="4.6" height="3" fill="#5b95e0" stroke="none"/>
<rect x="998.8" y="805.6" width="4.7" height="3" fill="#1e62c0" stroke="none"/>
<rect x="1009.2" y="805.6" width="4.8" height="3" fill="#ffffff" stroke="none"/>
<rect x="1004" y="809.3" width="4.6" height="3" fill="#ffffff" stroke="none"/>
<rect x="1009.2" y="809.3" width="4.8" height="3" fill="#5b95e0" stroke="none"/>
<rect x="998.8" y="813" width="4.7" height="3.1" fill="#0f4a9a" stroke="none"/>
<rect x="1004" y="813" width="4.6" height="3.1" fill="#0f4a9a" stroke="none"/>
<rect x="1009.2" y="813" width="4.8" height="3.1" fill="#0f4a9a" stroke="none"/>
<rect x="1031.8" y="798.8" width="17.2" height="17.3" rx="2" fill="url(#gmy)" stroke="none"/><path d="M1034.5,802.5 Q1040,801 1042.5,808 Q1043.5,812 1046,813.5 M1036,805 Q1036.5,809 1037.8,810" stroke="#b8d4e8" stroke-width="0.7"/><path d="M1045,801 L1047,803.2" stroke="#e8f0f8" stroke-width="1.3"/>
<circle cx="1074" cy="807.3" r="9.2" fill="#ff6c37" stroke="none"/><path d="M1069,813.2 L1077.5,803.2" stroke="#fff" stroke-width="1.5"/><ellipse cx="1078.2" cy="802.5" rx="1.1" ry="2" transform="rotate(40 1078.2 802.5)" fill="#fff" stroke="none"/>
<g transform="translate(1107.8,807.5)"><circle r="7" fill="#6b7480" stroke="none"/><rect x="-2.3" y="-9.2" width="4.6" height="4" rx="1" fill="#6b7480" stroke="none" transform="rotate(0)"/><rect x="-2.3" y="-9.2" width="4.6" height="4" rx="1" fill="#6b7480" stroke="none" transform="rotate(60)"/><rect x="-2.3" y="-9.2" width="4.6" height="4" rx="1" fill="#6b7480" stroke="none" transform="rotate(120)"/><rect x="-2.3" y="-9.2" width="4.6" height="4" rx="1" fill="#6b7480" stroke="none" transform="rotate(180)"/><rect x="-2.3" y="-9.2" width="4.6" height="4" rx="1" fill="#6b7480" stroke="none" transform="rotate(240)"/><rect x="-2.3" y="-9.2" width="4.6" height="4" rx="1" fill="#6b7480" stroke="none" transform="rotate(300)"/><circle r="4.9" fill="#fff" stroke="none"/><circle r="3.8" fill="#0f5bb5" stroke="none"/></g>
<rect x="1133.2" y="799.1" width="16.8" height="17" rx="2.2" fill="url(#gphot)" stroke="none"/><path d="M1134,815.5 L1142,806.5 Q1143,805.5 1144,806.5 L1150,812.5 V814 Q1150,816.1 1148,816.1 H1135 Z" fill="#3fb8f0" stroke="none"/><path d="M1139,816.1 L1145,809.5 L1150,813 V814 Q1150,816.1 1148,816.1 Z" fill="#1a8ae0" stroke="none"/><circle cx="1145.4" cy="802.4" r="1.5" fill="#fff" stroke="none"/>
<rect x="1170.3" y="799.1" width="13.6" height="16.9" rx="1" fill="#1e8e4e" stroke="none"/><rect x="1177" y="799.1" width="6.9" height="5.6" fill="#33c481" stroke="none"/><rect x="1177" y="804.7" width="6.9" height="5.6" fill="#21a366" stroke="none"/><rect x="1170.3" y="810.3" width="13.6" height="5.7" fill="#107c41" stroke="none"/>
<rect x="1166.1" y="803.2" width="8.9" height="8.8" rx="0.8" fill="#0f6b38" stroke="none"/><path d="M1168.3,805.3 L1172.8,809.9 M1172.8,805.3 L1168.3,809.9" stroke="#fff" stroke-width="1.2"/>
<rect x="566.5999999999999" y="820.2" width="4.4" height="1.7" rx="0.85" fill="#8a8a8a" stroke="none"/>
<rect x="600.3" y="820.2" width="4.4" height="1.7" rx="0.85" fill="#8a8a8a" stroke="none"/>
<rect x="634.0999999999999" y="820.2" width="4.4" height="1.7" rx="0.85" fill="#8a8a8a" stroke="none"/>
<rect x="701.1999999999999" y="820.2" width="4.4" height="1.7" rx="0.85" fill="#8a8a8a" stroke="none"/>
<rect x="734.9" y="820.2" width="4.4" height="1.7" rx="0.85" fill="#8a8a8a" stroke="none"/>
<rect x="835.9" y="820.2" width="4.4" height="1.7" rx="0.85" fill="#8a8a8a" stroke="none"/>
<rect x="903.0" y="820.2" width="4.4" height="1.7" rx="0.85" fill="#8a8a8a" stroke="none"/>
<rect x="1105.3999999999999" y="820.2" width="4.4" height="1.7" rx="0.85" fill="#8a8a8a" stroke="none"/>
<rect x="1139.0" y="820.2" width="4.4" height="1.7" rx="0.85" fill="#8a8a8a" stroke="none"/>
<rect x="1172.8" y="820.2" width="4.4" height="1.7" rx="0.85" fill="#8a8a8a" stroke="none"/></svg>
<svg width="1470" height="826" viewBox="0 0 1470 826" font-family="Liberation Sans" white-space="pre" style="white-space:pre"><text x="36.50" y="21.93" font-size="9.8" stroke="#5db27f" stroke-width="0.2" fill="#5db27f" textLength="95.70" lengthAdjust="spacingAndGlyphs">Salvataggio automatico</text>
<text x="205.80" y="22.03" font-size="9.8" stroke="#5db27f" stroke-width="0.2" fill="#5db27f" textLength="80.70" lengthAdjust="spacingAndGlyphs">components (2).xlsx</text>
<text x="291.20" y="22.03" font-size="9.8" stroke="#5db27f" stroke-width="0.2" fill="#5db27f" textLength="3.00" lengthAdjust="spacingAndGlyphs">-</text>
<text x="299.80" y="22.03" font-size="9.8" stroke="#5db27f" stroke-width="0.2" fill="#5db27f" textLength="19.40" lengthAdjust="spacingAndGlyphs">Excel</text>
<text x="599.80" y="22.03" font-size="9.8" stroke="#72b48e" stroke-width="0.2" fill="#72b48e" textLength="63.40" lengthAdjust="spacingAndGlyphs">Cerca (ALT+X)</text>
<text x="1227.80" y="21.93" font-size="9.8" stroke="#5db27f" stroke-width="0.2" fill="#5db27f" textLength="60.40" lengthAdjust="spacingAndGlyphs">Veronica Carini</text>
<text x="1300.30" y="21.80" font-size="10.0" stroke="#cdebb0" stroke-width="0.2" fill="#cdebb0" textLength="11.10" lengthAdjust="spacingAndGlyphs">VC</text>
<text x="16.10" y="52.23" font-size="10.1" stroke="#303030" stroke-width="0.2" fill="#303030" textLength="14.30" lengthAdjust="spacingAndGlyphs">File</text>
<text x="51.20" y="52.23" font-size="10.1" stroke="#1e1e1e" stroke-width="0.5" fill="#1e1e1e" textLength="28.60" lengthAdjust="spacingAndGlyphs">Home</text>
<text x="94.70" y="52.23" font-size="10.1" stroke="#303030" stroke-width="0.2" fill="#303030" textLength="35.50" lengthAdjust="spacingAndGlyphs">Inserisci</text>
<text x="145.10" y="52.23" font-size="10.1" stroke="#303030" stroke-width="0.2" fill="#303030" textLength="36.70" lengthAdjust="spacingAndGlyphs">Disegno</text>
<text x="198.80" y="52.23" font-size="10.1" stroke="#303030" stroke-width="0.2" fill="#303030" textLength="74.40" lengthAdjust="spacingAndGlyphs">Layout di pagina</text>
<text x="290.00" y="52.23" font-size="10.1" stroke="#303030" stroke-width="0.2" fill="#303030" textLength="36.20" lengthAdjust="spacingAndGlyphs">Formule</text>
<text x="342.00" y="52.23" font-size="10.1" stroke="#303030" stroke-width="0.2" fill="#303030" textLength="17.80" lengthAdjust="spacingAndGlyphs">Dati</text>
<text x="375.80" y="52.23" font-size="10.1" stroke="#303030" stroke-width="0.2" fill="#303030" textLength="42.20" lengthAdjust="spacingAndGlyphs">Revisione</text>
<text x="432.80" y="52.23" font-size="10.1" stroke="#303030" stroke-width="0.2" fill="#303030" textLength="43.40" lengthAdjust="spacingAndGlyphs">Visualizza</text>
<text x="490.80" y="52.23" font-size="10.1" stroke="#303030" stroke-width="0.2" fill="#303030" textLength="26.40" lengthAdjust="spacingAndGlyphs">Guida</text>
<text x="533.30" y="52.23" font-size="10.1" stroke="#303030" stroke-width="0.2" fill="#303030" textLength="35.70" lengthAdjust="spacingAndGlyphs">Acrobat</text>
<text x="1329.80" y="52.03" font-size="10.1" stroke="#262626" stroke-width="0.5" fill="#262626" textLength="48.40" lengthAdjust="spacingAndGlyphs">Commenti</text>
<text x="1409.60" y="52.03" font-size="10.1" stroke="#f2f8f4" stroke-width="0.5" fill="#f2f8f4" textLength="44.10" lengthAdjust="spacingAndGlyphs">Condividi</text>
<text x="14.50" y="132.23" font-size="9.8" stroke="#3b3b3b" stroke-width="0.2" fill="#3b3b3b" textLength="30.40" lengthAdjust="spacingAndGlyphs">Annulla</text>
<text x="94.10" y="132.23" font-size="9.8" stroke="#3b3b3b" stroke-width="0.2" fill="#3b3b3b" textLength="32.10" lengthAdjust="spacingAndGlyphs">Appunti</text>
<text x="248.40" y="132.23" font-size="9.8" stroke="#3b3b3b" stroke-width="0.2" fill="#3b3b3b" textLength="35.60" lengthAdjust="spacingAndGlyphs">Carattere</text>
<text x="458.60" y="132.23" font-size="9.8" stroke="#3b3b3b" stroke-width="0.2" fill="#3b3b3b" textLength="51.60" lengthAdjust="spacingAndGlyphs">Allineamento</text>
<text x="661.50" y="132.23" font-size="9.8" stroke="#3b3b3b" stroke-width="0.2" fill="#3b3b3b" textLength="28.30" lengthAdjust="spacingAndGlyphs">Numeri</text>
<text x="824.40" y="132.23" font-size="9.8" stroke="#3b3b3b" stroke-width="0.2" fill="#3b3b3b" textLength="14.80" lengthAdjust="spacingAndGlyphs">Stili</text>
<text x="972.10" y="132.23" font-size="9.8" stroke="#3b3b3b" stroke-width="0.2" fill="#3b3b3b" textLength="19.10" lengthAdjust="spacingAndGlyphs">Celle</text>
<text x="1136.20" y="132.23" font-size="9.8" stroke="#3b3b3b" stroke-width="0.2" fill="#3b3b3b" textLength="34.60" lengthAdjust="spacingAndGlyphs">Modifica</text>
<text x="1271.60" y="132.23" font-size="9.8" stroke="#3b3b3b" stroke-width="0.2" fill="#3b3b3b" textLength="48.40" lengthAdjust="spacingAndGlyphs">Riservatezza</text>
<text x="1330.60" y="132.23" font-size="9.8" stroke="#3b3b3b" stroke-width="0.2" fill="#3b3b3b" textLength="59.00" lengthAdjust="spacingAndGlyphs">Adobe Acrobat</text>
<text x="60.40" y="102.43" font-size="9.8" stroke="#262626" stroke-width="0.2" fill="#262626" textLength="27.00" lengthAdjust="spacingAndGlyphs">Incolla</text>
<text x="110.60" y="76.03" font-size="9.8" stroke="#262626" stroke-width="0.2" fill="#262626" textLength="23.30" lengthAdjust="spacingAndGlyphs">Taglia</text>
<text x="110.60" y="96.03" font-size="9.8" stroke="#262626" stroke-width="0.2" fill="#262626" textLength="23.30" lengthAdjust="spacingAndGlyphs">Copia</text>
<text x="110.60" y="116.13" font-size="9.8" stroke="#262626" stroke-width="0.2" fill="#262626" textLength="58.60" lengthAdjust="spacingAndGlyphs">Copia formato</text>
<text x="498.30" y="82.03" font-size="9.8" stroke="#262626" stroke-width="0.2" fill="#262626" textLength="49.70" lengthAdjust="spacingAndGlyphs">Testo a capo</text>
<text x="497.80" y="106.73" font-size="9.8" stroke="#262626" stroke-width="0.2" fill="#262626" textLength="96.80" lengthAdjust="spacingAndGlyphs">Unisci e allinea al centro</text>
<text x="752.40" y="101.33" font-size="9.8" stroke="#262626" stroke-width="0.2" fill="#262626" textLength="58.80" lengthAdjust="spacingAndGlyphs">Formattazione</text>
<text x="751.80" y="113.53" font-size="9.8" stroke="#262626" stroke-width="0.2" fill="#262626" textLength="50.90" lengthAdjust="spacingAndGlyphs">condizionale</text>
<text x="816.60" y="101.33" font-size="9.8" stroke="#262626" stroke-width="0.2" fill="#262626" textLength="62.60" lengthAdjust="spacingAndGlyphs">Formatta come</text>
<text x="830.50" y="113.53" font-size="9.8" stroke="#262626" stroke-width="0.2" fill="#262626" textLength="26.70" lengthAdjust="spacingAndGlyphs">tabella</text>
<text x="890.80" y="101.33" font-size="9.8" stroke="#262626" stroke-width="0.2" fill="#262626" textLength="14.70" lengthAdjust="spacingAndGlyphs">Stili</text>
<text x="885.30" y="113.53" font-size="9.8" stroke="#262626" stroke-width="0.2" fill="#262626" textLength="17.80" lengthAdjust="spacingAndGlyphs">cella</text>
<text x="928.30" y="101.93" font-size="9.8" stroke="#262626" stroke-width="0.2" fill="#262626" textLength="32.90" lengthAdjust="spacingAndGlyphs">Inserisci</text>
<text x="966.20" y="101.93" font-size="9.8" stroke="#262626" stroke-width="0.2" fill="#262626" textLength="29.80" lengthAdjust="spacingAndGlyphs">Elimina</text>
<text x="1001.30" y="101.33" font-size="9.8" stroke="#262626" stroke-width="0.2" fill="#262626" textLength="34.30" lengthAdjust="spacingAndGlyphs">Formato</text>
<text x="1068.40" y="76.13" font-size="9.8" stroke="#262626" stroke-width="0.2" fill="#262626" textLength="80.30" lengthAdjust="spacingAndGlyphs">Somma automatica</text>
<text x="1068.40" y="95.93" font-size="9.8" stroke="#262626" stroke-width="0.2" fill="#262626" textLength="55.80" lengthAdjust="spacingAndGlyphs">Riempimento</text>
<text x="1068.40" y="115.73" font-size="9.8" stroke="#262626" stroke-width="0.2" fill="#262626" textLength="35.20" lengthAdjust="spacingAndGlyphs">Cancella</text>
<text x="1170.30" y="101.33" font-size="9.8" stroke="#262626" stroke-width="0.2" fill="#262626" textLength="35.20" lengthAdjust="spacingAndGlyphs">Ordina e</text>
<text x="1174.30" y="113.33" font-size="9.8" stroke="#262626" stroke-width="0.2" fill="#262626" textLength="18.10" lengthAdjust="spacingAndGlyphs">filtra</text>
<text x="1218.80" y="101.33" font-size="9.8" stroke="#262626" stroke-width="0.2" fill="#262626" textLength="29.50" lengthAdjust="spacingAndGlyphs">Trova e</text>
<text x="1210.40" y="113.33" font-size="9.8" stroke="#262626" stroke-width="0.2" fill="#262626" textLength="36.80" lengthAdjust="spacingAndGlyphs">seleziona</text>
<text x="1271.60" y="101.33" font-size="9.8" stroke="#b4b4b4" stroke-width="0.2" fill="#b4b4b4" textLength="48.40" lengthAdjust="spacingAndGlyphs">Riservatezza</text>
<text x="1350.60" y="101.33" font-size="9.8" stroke="#262626" stroke-width="0.2" fill="#262626" textLength="18.40" lengthAdjust="spacingAndGlyphs">Crea</text>
<text x="1345.40" y="113.33" font-size="9.8" stroke="#262626" stroke-width="0.2" fill="#262626" textLength="28.80" lengthAdjust="spacingAndGlyphs">un PDF</text>
<text x="190.80" y="81.53" font-size="9.8" stroke="#262626" stroke-width="0.2" fill="#262626" textLength="25.80" lengthAdjust="spacingAndGlyphs">Calibri</text>
<text x="282.20" y="81.53" font-size="9.8" stroke="#262626" stroke-width="0.2" fill="#262626" textLength="8.30" lengthAdjust="spacingAndGlyphs">11</text>
<text x="628.80" y="81.53" font-size="9.8" stroke="#262626" stroke-width="0.2" fill="#262626" textLength="35.30" lengthAdjust="spacingAndGlyphs">Generale</text>
<text x="11.40" y="155.87" font-size="9.6" stroke="#262626" stroke-width="0.2" fill="#262626" textLength="18.80" lengthAdjust="spacingAndGlyphs">N18</text>
<text x="54.00" y="209.10" font-size="10" stroke="#333333" stroke-width="0.2" fill="#333333" text-anchor="middle">A</text>
<text x="133.05" y="209.10" font-size="10" stroke="#333333" stroke-width="0.2" fill="#333333" text-anchor="middle">B</text>
<text x="192.90" y="209.10" font-size="10" stroke="#333333" stroke-width="0.2" fill="#333333" text-anchor="middle">C</text>
<text x="227.55" y="209.10" font-size="10" stroke="#333333" stroke-width="0.2" fill="#333333" text-anchor="middle">D</text>
<text x="273.25" y="209.10" font-size="10" stroke="#333333" stroke-width="0.2" fill="#333333" text-anchor="middle">E</text>
<text x="350.50" y="209.10" font-size="10" stroke="#333333" stroke-width="0.2" fill="#333333" text-anchor="middle">F</text>
<text x="483.95" y="209.10" font-size="10" stroke="#333333" stroke-width="0.2" fill="#333333" text-anchor="middle">G</text>
<text x="590.95" y="209.10" font-size="10" stroke="#333333" stroke-width="0.2" fill="#333333" text-anchor="middle">H</text>
<text x="639.90" y="209.10" font-size="10" stroke="#333333" stroke-width="0.2" fill="#333333" text-anchor="middle">I</text>
<text x="688.90" y="209.10" font-size="10" stroke="#333333" stroke-width="0.2" fill="#333333" text-anchor="middle">J</text>
<text x="737.90" y="209.10" font-size="10" stroke="#333333" stroke-width="0.2" fill="#333333" text-anchor="middle">K</text>
<text x="786.90" y="209.10" font-size="10" stroke="#333333" stroke-width="0.2" fill="#333333" text-anchor="middle">L</text>
<text x="835.90" y="209.10" font-size="10" stroke="#333333" stroke-width="0.2" fill="#333333" text-anchor="middle">M</text>
<text x="884.90" y="209.10" font-size="10" stroke="#333333" stroke-width="0.2" fill="#333333" text-anchor="middle">N</text>
<text x="933.90" y="209.10" font-size="10" stroke="#333333" stroke-width="0.2" fill="#333333" text-anchor="middle">O</text>
<text x="982.90" y="209.10" font-size="10" stroke="#333333" stroke-width="0.2" fill="#333333" text-anchor="middle">P</text>
<text x="1031.90" y="209.10" font-size="10" stroke="#333333" stroke-width="0.2" fill="#333333" text-anchor="middle">Q</text>
<text x="1080.90" y="209.10" font-size="10" stroke="#333333" stroke-width="0.2" fill="#333333" text-anchor="middle">R</text>
<text x="1129.90" y="209.10" font-size="10" stroke="#333333" stroke-width="0.2" fill="#333333" text-anchor="middle">S</text>
<text x="1178.90" y="209.10" font-size="10" stroke="#333333" stroke-width="0.2" fill="#333333" text-anchor="middle">T</text>
<text x="1227.90" y="209.10" font-size="10" stroke="#333333" stroke-width="0.2" fill="#333333" text-anchor="middle">U</text>
<text x="1276.90" y="209.10" font-size="10" stroke="#333333" stroke-width="0.2" fill="#333333" text-anchor="middle">V</text>
<text x="1325.90" y="209.10" font-size="10" stroke="#333333" stroke-width="0.2" fill="#333333" text-anchor="middle">W</text>
<text x="1374.90" y="209.10" font-size="10" stroke="#333333" stroke-width="0.2" fill="#333333" text-anchor="middle">X</text>
<text x="1423.90" y="209.10" font-size="10" stroke="#333333" stroke-width="0.2" fill="#333333" text-anchor="middle">Y</text>
<text x="10.00" y="223.77" font-size="9.8" stroke="#333333" stroke-width="0.2" fill="#333333" text-anchor="middle">1</text>
<text x="10.00" y="238.30" font-size="9.8" stroke="#333333" stroke-width="0.2" fill="#333333" text-anchor="middle">2</text>
<text x="10.00" y="252.83" font-size="9.8" stroke="#333333" stroke-width="0.2" fill="#333333" text-anchor="middle">3</text>
<text x="10.00" y="267.35" font-size="9.8" stroke="#333333" stroke-width="0.2" fill="#333333" text-anchor="middle">4</text>
<text x="10.00" y="281.88" font-size="9.8" stroke="#333333" stroke-width="0.2" fill="#333333" text-anchor="middle">5</text>
<text x="10.00" y="296.40" font-size="9.8" stroke="#333333" stroke-width="0.2" fill="#333333" text-anchor="middle">6</text>
<text x="10.00" y="310.93" font-size="9.8" stroke="#333333" stroke-width="0.2" fill="#333333" text-anchor="middle">7</text>
<text x="10.00" y="325.46" font-size="9.8" stroke="#333333" stroke-width="0.2" fill="#333333" text-anchor="middle">8</text>
<text x="10.00" y="339.98" font-size="9.8" stroke="#333333" stroke-width="0.2" fill="#333333" text-anchor="middle">9</text>
<text x="10.00" y="354.51" font-size="9.8" stroke="#333333" stroke-width="0.2" fill="#333333" text-anchor="middle">10</text>
<text x="10.00" y="369.03" font-size="9.8" stroke="#333333" stroke-width="0.2" fill="#333333" text-anchor="middle">11</text>
<text x="10.00" y="383.56" font-size="9.8" stroke="#333333" stroke-width="0.2" fill="#333333" text-anchor="middle">12</text>
<text x="10.00" y="398.09" font-size="9.8" stroke="#333333" stroke-width="0.2" fill="#333333" text-anchor="middle">13</text>
<text x="10.00" y="412.61" font-size="9.8" stroke="#333333" stroke-width="0.2" fill="#333333" text-anchor="middle">14</text>
<text x="10.00" y="427.14" font-size="9.8" stroke="#333333" stroke-width="0.2" fill="#333333" text-anchor="middle">15</text>
<text x="10.00" y="441.66" font-size="9.8" stroke="#333333" stroke-width="0.2" fill="#333333" text-anchor="middle">16</text>
<text x="10.00" y="456.19" font-size="9.8" stroke="#333333" stroke-width="0.2" fill="#333333" text-anchor="middle">17</text>
<text x="10.00" y="470.72" font-size="9.8" stroke="#333333" stroke-width="0.2" fill="#333333" text-anchor="middle">18</text>
<text x="10.00" y="485.24" font-size="9.8" stroke="#333333" stroke-width="0.2" fill="#333333" text-anchor="middle">19</text>
<text x="10.00" y="499.77" font-size="9.8" stroke="#333333" stroke-width="0.2" fill="#333333" text-anchor="middle">20</text>
<text x="10.00" y="514.29" font-size="9.8" stroke="#333333" stroke-width="0.2" fill="#333333" text-anchor="middle">21</text>
<text x="10.00" y="528.82" font-size="9.8" stroke="#333333" stroke-width="0.2" fill="#333333" text-anchor="middle">22</text>
<text x="10.00" y="543.35" font-size="9.8" stroke="#333333" stroke-width="0.2" fill="#333333" text-anchor="middle">23</text>
<text x="10.00" y="557.87" font-size="9.8" stroke="#333333" stroke-width="0.2" fill="#333333" text-anchor="middle">24</text>
<text x="10.00" y="572.40" font-size="9.8" stroke="#333333" stroke-width="0.2" fill="#333333" text-anchor="middle">25</text>
<text x="10.00" y="586.92" font-size="9.8" stroke="#333333" stroke-width="0.2" fill="#333333" text-anchor="middle">26</text>
<text x="10.00" y="601.45" font-size="9.8" stroke="#333333" stroke-width="0.2" fill="#333333" text-anchor="middle">27</text>
<text x="10.00" y="615.98" font-size="9.8" stroke="#333333" stroke-width="0.2" fill="#333333" text-anchor="middle">28</text>
<text x="10.00" y="630.50" font-size="9.8" stroke="#333333" stroke-width="0.2" fill="#333333" text-anchor="middle">29</text>
<text x="10.00" y="645.03" font-size="9.8" stroke="#333333" stroke-width="0.2" fill="#333333" text-anchor="middle">30</text>
<text x="10.00" y="659.55" font-size="9.8" stroke="#333333" stroke-width="0.2" fill="#333333" text-anchor="middle">31</text>
<text x="10.00" y="674.08" font-size="9.8" stroke="#333333" stroke-width="0.2" fill="#333333" text-anchor="middle">32</text>
<text x="10.00" y="688.61" font-size="9.8" stroke="#333333" stroke-width="0.2" fill="#333333" text-anchor="middle">33</text>
<text x="10.00" y="703.13" font-size="9.8" stroke="#333333" stroke-width="0.2" fill="#333333" text-anchor="middle">34</text>
<text x="10.00" y="717.66" font-size="9.8" stroke="#333333" stroke-width="0.2" fill="#333333" text-anchor="middle">35</text>
<text x="10.00" y="732.18" font-size="9.8" stroke="#333333" stroke-width="0.2" fill="#333333" text-anchor="middle">36</text>
<text x="10.00" y="746.71" font-size="9.8" stroke="#333333" stroke-width="0.2" fill="#333333" text-anchor="middle">37</text>
<text x="22.40" y="225.20" font-size="10.3" font-weight="700" fill="#111111" textLength="63.50" lengthAdjust="spacingAndGlyphs">GROUP CODE</text>
<text x="92.00" y="225.20" font-size="10.3" font-weight="700" fill="#111111" textLength="82.60" lengthAdjust="spacingAndGlyphs">SUBGROUP CODE</text>
<text x="179.80" y="225.20" font-size="10.3" font-weight="700" fill="#111111" textLength="26.40" lengthAdjust="spacingAndGlyphs">CODE</text>
<text x="210.80" y="225.20" font-size="10.3" font-weight="700" fill="#111111" textLength="33.90" lengthAdjust="spacingAndGlyphs">IMAGE</text>
<text x="249.30" y="225.20" font-size="10.3" font-weight="700" fill="#111111" textLength="48.40" lengthAdjust="spacingAndGlyphs">IMAGE 3D</text>
<text x="303.60" y="225.20" font-size="10.3" font-weight="700" fill="#111111" textLength="94.60" lengthAdjust="spacingAndGlyphs">INSTALLATION DATE</text>
<text x="406.60" y="225.20" font-size="10.3" font-weight="700" fill="#111111" textLength="155.40" lengthAdjust="spacingAndGlyphs">MAINTENANCE STATE FUNCTION</text>
<text x="94.90" y="761.83" font-size="10.1" stroke="#262626" stroke-width="0.5" fill="#262626" textLength="73.10" lengthAdjust="spacingAndGlyphs">COMPONENTS</text>
<text x="188.80" y="763.80" font-size="10.0" stroke="#303030" stroke-width="0.2" fill="#303030" textLength="143.80" lengthAdjust="spacingAndGlyphs">COMPONENT TRANSLATIONS</text>
<text x="354.50" y="763.80" font-size="10.0" stroke="#303030" stroke-width="0.2" fill="#303030" textLength="112.70" lengthAdjust="spacingAndGlyphs">GROUP TRANSLATIONS</text>
<text x="490.80" y="763.80" font-size="10.0" stroke="#303030" stroke-width="0.2" fill="#303030" textLength="132.10" lengthAdjust="spacingAndGlyphs">SUBGROUP TRANSLATIONS</text>
<text x="643.70" y="763.80" font-size="10.0" stroke="#303030" stroke-width="0.2" fill="#303030" textLength="53.50" lengthAdjust="spacingAndGlyphs">COUNTERS</text>
<text x="718.60" y="763.80" font-size="10.0" stroke="#303030" stroke-width="0.2" fill="#303030" textLength="103.40" lengthAdjust="spacingAndGlyphs">COUNTER TRANSLATI</text>
<text x="5.40" y="785.43" font-size="9.8" stroke="#303030" stroke-width="0.2" fill="#303030" textLength="26.80" lengthAdjust="spacingAndGlyphs">Pronto</text>
<text x="1104.80" y="785.03" font-size="9.8" stroke="#303030" stroke-width="0.2" fill="#303030" textLength="120.80" lengthAdjust="spacingAndGlyphs">Impostazioni di visualizzazione</text>
<text x="1443.90" y="784.63" font-size="9.8" stroke="#303030" stroke-width="0.2" fill="#303030" textLength="20.10" lengthAdjust="spacingAndGlyphs">100%</text>
<text x="38.60" y="805.13" font-size="9.8" stroke="#1a1a1a" stroke-width="0.2" fill="#1a1a1a" textLength="19.40" lengthAdjust="spacingAndGlyphs">28°C</text>
<text x="38.60" y="817.13" font-size="9.8" stroke="#505050" stroke-width="0.2" fill="#505050" textLength="44.90" lengthAdjust="spacingAndGlyphs">Soleggiato</text>
<text x="342.70" y="811.47" font-size="9.6" stroke="#6a6a6a" stroke-width="0.2" fill="#6a6a6a" textLength="26.50" lengthAdjust="spacingAndGlyphs">Cerca</text>
<text x="1433.70" y="805.03" font-size="9.8" stroke="#3a3a3a" stroke-width="0.2" fill="#3a3a3a" textLength="21.50" lengthAdjust="spacingAndGlyphs">17:13</text>
<text x="1407.70" y="817.23" font-size="9.8" stroke="#3a3a3a" stroke-width="0.2" fill="#3a3a3a" textLength="47.50" lengthAdjust="spacingAndGlyphs">04/09/2025</text>
<text x="140.2" y="155.8" font-family="Liberation Serif" font-size="13" font-style="italic" fill="#333">fx</text>
<text x="676.8" y="804.2" font-size="9.4" font-weight="700" fill="#fff" text-anchor="middle">2</text>
<text x="710.8" y="804.2" font-size="9" font-weight="700" fill="#f0f0f0" text-anchor="middle">V</text></svg>
</div></body></html>
